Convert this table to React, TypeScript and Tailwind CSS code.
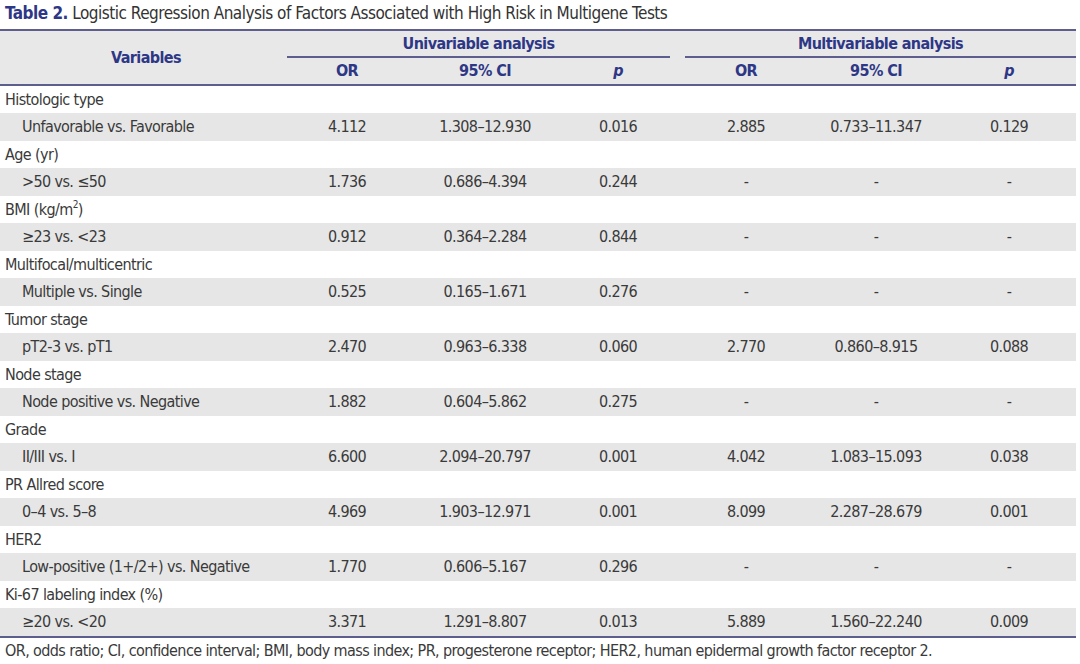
const rows: Array<{ group: string; sup?: boolean; label: string; u: [string, string, string]; m: [string, string, string] }> = [
  { group: "Histologic type", label: "Unfavorable vs. Favorable", u: ["4.112", "1.308–12.930", "0.016"], m: ["2.885", "0.733–11.347", "0.129"] },
  { group: "Age (yr)", label: ">50 vs. ≤50", u: ["1.736", "0.686–4.394", "0.244"], m: ["-", "-", "-"] },
  { group: "BMI (kg/m", sup: true, label: "≥23 vs. <23", u: ["0.912", "0.364–2.284", "0.844"], m: ["-", "-", "-"] },
  { group: "Multifocal/multicentric", label: "Multiple vs. Single", u: ["0.525", "0.165–1.671", "0.276"], m: ["-", "-", "-"] },
  { group: "Tumor stage", label: "pT2-3 vs. pT1", u: ["2.470", "0.963–6.338", "0.060"], m: ["2.770", "0.860–8.915", "0.088"] },
  { group: "Node stage", label: "Node positive vs. Negative", u: ["1.882", "0.604–5.862", "0.275"], m: ["-", "-", "-"] },
  { group: "Grade", label: "II/III vs. I", u: ["6.600", "2.094–20.797", "0.001"], m: ["4.042", "1.083–15.093", "0.038"] },
  { group: "PR Allred score", label: "0–4 vs. 5–8", u: ["4.969", "1.903–12.971", "0.001"], m: ["8.099", "2.287–28.679", "0.001"] },
  { group: "HER2", label: "Low-positive (1+/2+) vs. Negative", u: ["1.770", "0.606–5.167", "0.296"], m: ["-", "-", "-"] },
  { group: "Ki-67 labeling index (%)", label: "≥20 vs. <20", u: ["3.371", "1.291–8.807", "0.013"], m: ["5.889", "1.560–22.240", "0.009"] },
];

const cols = "grid grid-cols-[278px_138px_138px_128px_128px_132px_134px]";

export default function App() {
  return (
    <div className="h-[664px] w-[1080px] bg-white font-['DejaVu_Sans_Condensed',sans-serif] text-[16px] tracking-[-0.6px] text-[#3a3a3a]">
      <div className="h-[29px] pl-[5px] pt-[2px] text-[17px] leading-[22px] tracking-[-0.5px]">
        <span className="font-bold text-[#2e3786]">Table 2.</span>
        <span className="text-[#333]"> Logistic Regression Analysis of Factors Associated with High Risk in Multigene Tests</span>
      </div>

      <div className="w-[1076px]">
        <div className="border-y-2 border-[#5e5e8e] bg-[#e8e8e8] font-bold text-[#2e3786]">
          <div className={cols}>
            <div className="row-span-2 flex items-center justify-center pl-[14px]">Variables</div>
            <div className="col-span-3 ml-[9px] mr-[12px] flex h-[27px] items-center justify-center border-b-2 border-[#5e5e8e]">
              Univariable analysis
            </div>
            <div className="col-span-3 ml-[3px] flex h-[27px] items-center justify-center border-b-2 border-[#5e5e8e]">
              Multivariable analysis
            </div>
            <div className="flex h-[26px] items-center justify-center">OR</div>
            <div className="flex h-[26px] items-center justify-center">95% CI</div>
            <div className="flex h-[26px] items-center justify-center italic">p</div>
            <div className="flex h-[26px] items-center justify-center">OR</div>
            <div className="flex h-[26px] items-center justify-center">95% CI</div>
            <div className="flex h-[26px] items-center justify-center italic">p</div>
          </div>
        </div>

        {rows.map((row) => (
          <div key={row.group}>
            <div className="flex h-[27px] items-center pl-[5px]">
              {row.group}
              {row.sup ? (
                <>
                  <sup className="text-[10px]">2</sup>)
                </>
              ) : null}
            </div>
            <div className={`${cols} h-[28px] items-center bg-[#e6e6e6]`}>
              <div className="pl-[22px]">{row.label}</div>
              {[...row.u, ...row.m].map((value, index) => (
                <div className="text-center" key={index}>
                  {value}
                </div>
              ))}
            </div>
          </div>
        ))}

        <div className="border-t-2 border-[#5e5e8e] pl-[5px] pt-[3px] text-[16px] leading-[20px]">
          OR, odds ratio; CI, confidence interval; BMI, body mass index; PR, progesterone receptor; HER2, human epidermal growth factor receptor 2.
        </div>
      </div>
    </div>
  );
}
